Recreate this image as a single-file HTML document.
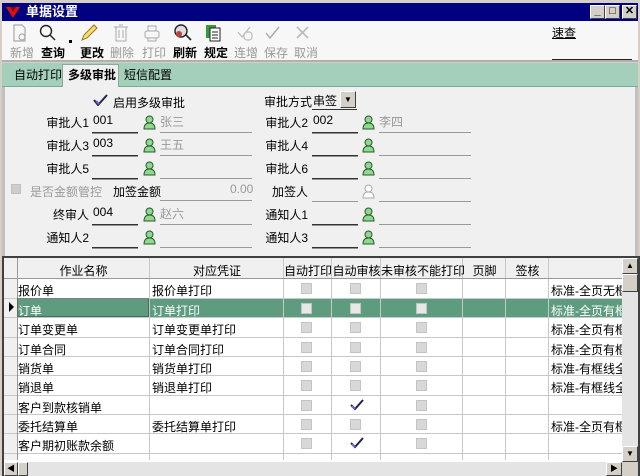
<!DOCTYPE html>
<html><head><meta charset="utf-8"><style>
*{margin:0;padding:0;box-sizing:border-box}
body{width:640px;height:476px;overflow:hidden;background:#d4d0c8;font-family:"Liberation Sans","Noto Sans CJK SC",sans-serif;font-size:12px;color:#000;position:relative}
.a{position:absolute;white-space:nowrap}
.title{left:2px;top:3px;width:636px;height:18px;background:#000080;color:#fff;font-weight:bold;font-size:13px;line-height:18px;padding-left:24px}
.wb{top:5px;width:15px;height:14px;background:#d4d0c8;border:1px solid;border-color:#fff #404040 #404040 #fff;font-size:11px;line-height:11px;text-align:center;color:#000;font-weight:bold}
.tb{left:2px;top:21px;width:636px;height:41px;background:#f7f7f7;border-bottom:2px solid #b0b0b0}
.lbl{top:44px;font-size:12px;color:#999}
.lbl.b{color:#000;font-weight:bold}
.tabs{left:2px;top:63px;width:636px;height:24px;background:#a3cfbb;border-bottom:1px solid #7a9}
.tab{top:66px;font-size:12px;line-height:18px}
.form{left:2px;top:87px;width:636px;height:169px;background:#f0f0f0;border-left:3px solid #c0c0c0;border-right:3px solid #c0c0c0}
.l{font-size:12px;text-align:right;width:80px}
.grid{left:4px;top:258px;width:634px;height:217px;background:#fff}
.cb{width:10px;height:10px;background:#d4d4d4;border:1px solid #c0c0c0}
</style></head><body>
<div class="a title">单据设置</div>
<svg class="a" style="left:6px;top:6px" width="14" height="12"><path d="M0 1 L14 1 L7 12Z" fill="#e01010"/><path d="M4 1 L7 6 L10 1" fill="#800"/></svg>
<div class="a wb" style="left:590px">_</div>
<div class="a wb" style="left:605px">□</div>
<div class="a wb" style="left:622px">✕</div>
<div class="a tb"></div>
<svg class="a" style="left:0;top:22px" width="330" height="22">
<g fill="none" stroke="#aaa" stroke-width="1.2"><path d="M14 3h8l3 3v13h-11z"/><circle cx="22" cy="15" r="3"/></g>
<g fill="none" stroke="#222" stroke-width="1.4"><circle cx="46" cy="9" r="5.5"/><path d="M50 13l5 5"/></g>
<path d="M69 21h3v-3h-3z" fill="#000"/>
<path d="M82 18l2-5 10-10 3 3-10 10z" fill="#f8e070" stroke="#a07020"/>
<g fill="none" stroke="#aaa"><path d="M114 5h14M116 5v14h10v-14M119 8v8M123 8v8M119 3h4"/></g>
<g fill="none" stroke="#aaa"><rect x="145" y="9" width="14" height="7" rx="2"/><path d="M148 9v-5h8v5M148 16v3h8v-3"/></g>
<g><circle cx="181" cy="9" r="6" fill="#ddd" stroke="#222" stroke-width="1.4"/><path d="M186 13l5 5" stroke="#222" stroke-width="1.6"/><circle cx="179" cy="12" r="3" fill="#c04040"/></g>
<g><rect x="206" y="3" width="10" height="13" fill="#3a9a3a"/><rect x="210" y="6" width="10" height="13" fill="#fff" stroke="#222"/><path d="M212 10h6M212 13h6M212 16h6" stroke="#222"/></g>
<g fill="none" stroke="#bbb" stroke-width="1.2"><path d="M238 10l4 5 8-10"/><rect x="244" y="10" width="8" height="8" rx="3"/></g>
<path d="M266 11l4 5 9-11" fill="none" stroke="#aaa" stroke-width="1.4"/>
<path d="M297 5l11 11M308 5l-11 11" stroke="#bbb" stroke-width="1.6"/>
</svg>
<div class="a lbl" style="left:10px">新增</div>
<div class="a lbl b" style="left:41px">查询</div>
<div class="a lbl b" style="left:80px">更改</div>
<div class="a lbl" style="left:110px">删除</div>
<div class="a lbl" style="left:142px">打印</div>
<div class="a lbl b" style="left:173px">刷新</div>
<div class="a lbl b" style="left:204px">规定</div>
<div class="a lbl" style="left:234px">连增</div>
<div class="a lbl" style="left:264px">保存</div>
<div class="a lbl" style="left:294px">取消</div>
<div class="a" style="left:552px;top:24px;text-decoration:underline;font-size:12px">速查</div>
<div class="a" style="left:552px;top:59px;width:80px;height:1px;background:#222"></div>
<div class="a tabs"></div>
<div class="a" style="left:62px;top:64px;width:57px;height:24px;background:#f0f0f0;border:1px solid #8a9;border-bottom:none"></div>
<div class="a tab" style="left:14px">自动打印</div>
<div class="a tab" style="left:68px;font-weight:bold">多级审批</div>
<div class="a tab" style="left:124px">短信配置</div>
<div class="a form"></div>
<svg class="a" style="left:93px;top:94px" width="16" height="12"><path d="M1 6l4 5 9-10" fill="none" stroke="#224" stroke-width="2"/><path d="M3 7l3 3" stroke="#66c" stroke-width="2"/></svg>
<div class="a" style="left:113px;top:94px">启用多级审批</div>
<div class="a" style="left:264px;top:93px">审批方式</div>
<div class="a" style="left:313px;top:92px">串签</div>
<div class="a" style="left:340px;top:91px;width:16px;height:17px;background:#d4d0c8;border:1px solid;border-color:#fff #404040 #404040 #fff;font-size:8px;text-align:center;line-height:15px">▼</div>
<div class="a" style="left:312px;top:109px;width:45px;height:1px;background:#333"></div>

<svg width="0" height="0" style="position:absolute"><defs><g id="p"><circle cx="6.5" cy="4.5" r="3.5" fill="#8fd88f" stroke="#2a5a2a"/><path d="M1 14c0-5 3-6 5.5-6s5.5 1 5.5 6z" fill="#8fd88f" stroke="#2a5a2a"/></g><g id="q"><circle cx="6.5" cy="4.5" r="3.5" fill="#fff" stroke="#aaa"/><path d="M1 14c0-5 3-6 5.5-6s5.5 1 5.5 6z" fill="#fff" stroke="#aaa"/></g></defs></svg>

<div class="a l" style="left:9px;top:114px">审批人1</div><div class="a" style="left:93px;top:113px">001</div>
<div class="a l" style="left:9px;top:137px">审批人3</div><div class="a" style="left:93px;top:136px">003</div>
<div class="a l" style="left:9px;top:160px">审批人5</div>
<div class="a l" style="left:9px;top:206px">终审人</div><div class="a" style="left:93px;top:205px">004</div>
<div class="a l" style="left:9px;top:229px">通知人2</div>
<div class="a" style="left:160px;top:113px;color:#999">张三</div>
<div class="a" style="left:160px;top:136px;color:#999">王五</div>
<div class="a" style="left:160px;top:205px;color:#999">赵六</div>
<div class="a cb" style="left:11px;top:184px;background:#ccc"></div>
<div class="a" style="left:30px;top:183px;color:#999">是否金额管控</div>
<div class="a" style="left:113px;top:183px">加签金额</div>
<div class="a" style="left:230px;top:182px;color:#999">0.00</div>
<div class="a" style="left:160px;top:200px;width:92px;height:1px;background:#999"></div>

<div class="a l" style="left:228px;top:114px">审批人2</div><div class="a" style="left:313px;top:113px">002</div>
<div class="a l" style="left:228px;top:137px">审批人4</div>
<div class="a l" style="left:228px;top:160px">审批人6</div>
<div class="a l" style="left:228px;top:183px">加签人</div>
<div class="a l" style="left:228px;top:206px">通知人1</div>
<div class="a l" style="left:228px;top:229px">通知人3</div>
<div class="a" style="left:379px;top:113px;color:#999">李四</div>

<svg class="a" style="left:0;top:110px" width="480" height="140">
<rect x="92" y="22" width="46" height="1.5" fill="#333"/><rect x="160" y="22" width="92" height="1" fill="#999"/>
<rect x="92" y="45" width="46" height="1.5" fill="#333"/><rect x="160" y="45" width="92" height="1" fill="#999"/>
<rect x="92" y="68" width="46" height="1.5" fill="#333"/><rect x="160" y="68" width="92" height="1" fill="#999"/>
<rect x="92" y="114" width="46" height="1.5" fill="#333"/><rect x="160" y="114" width="92" height="1" fill="#999"/>
<rect x="92" y="137" width="46" height="1.5" fill="#333"/><rect x="160" y="137" width="92" height="1" fill="#999"/>
<use href="#p" x="143" y="5"/><use href="#p" x="143" y="28"/><use href="#p" x="143" y="51"/><use href="#p" x="143" y="97"/><use href="#p" x="143" y="120"/>
<g transform="translate(220,0)">
<rect x="92" y="22" width="46" height="1.5" fill="#333"/><rect x="159" y="22" width="92" height="1" fill="#999"/>
<rect x="92" y="45" width="46" height="1.5" fill="#333"/><rect x="159" y="45" width="92" height="1" fill="#999"/>
<rect x="92" y="68" width="46" height="1.5" fill="#333"/><rect x="159" y="68" width="92" height="1" fill="#999"/>
<rect x="92" y="91" width="46" height="1" fill="#999"/><rect x="159" y="91" width="92" height="1" fill="#999"/>
<rect x="92" y="114" width="46" height="1.5" fill="#333"/><rect x="159" y="114" width="92" height="1" fill="#999"/>
<rect x="92" y="137" width="46" height="1.5" fill="#333"/><rect x="159" y="137" width="92" height="1" fill="#999"/>
<use href="#p" x="142" y="5"/><use href="#p" x="142" y="28"/><use href="#p" x="142" y="51"/><use href="#q" x="142" y="74"/><use href="#p" x="142" y="97"/><use href="#p" x="142" y="120"/>
</g>
</svg>

<div class="a" style="left:2px;top:256px;width:638px;height:220px;background:#404040"></div>
<div class="a grid"></div>
<svg class="a" style="left:4px;top:258px" width="618" height="202">
<rect x="0" y="0" width="618" height="21" fill="#f0f0f0"/>
<rect x="0" y="0" width="13" height="202" fill="#f0f0f0"/>
<rect x="13" y="40" width="605" height="19" fill="#5e9c80"/>
<g stroke="#c8c8c8">
<path d="M0 40.5h618M0 59.5h618M0 79.5h618M0 98.5h618M0 117.5h618M0 137.5h618M0 156.5h618M0 175.5h618M0 195.5h618"/>
<path d="M145.5 0v202M279.5 0v202M327.5 0v202M376.5 0v202M458.5 0v202M501.5 0v202M544.5 0v202"/>
</g>
<path d="M0 20.5h618M13.5 0v202" stroke="#999"/>
<path d="M5 44l5 5-5 5z" fill="#000"/>
<path d="M13.5 40.5h131v18h-131z" fill="none" stroke="#333" stroke-dasharray="1 1"/>
</svg>
<div class="a" style="left:17px;width:133px;top:262px;text-align:center">作业名称</div>
<div class="a" style="left:150px;width:134px;top:262px;text-align:center">对应凭证</div>
<div class="a" style="left:284px;width:48px;top:262px;text-align:center">自动打印</div>
<div class="a" style="left:332px;width:49px;top:262px;text-align:center">自动审核</div>
<div class="a" style="left:381px;width:82px;top:262px;text-align:center">未审核不能打印</div>
<div class="a" style="left:463px;width:43px;top:262px;text-align:center">页脚</div>
<div class="a" style="left:506px;width:43px;top:262px;text-align:center">签核</div>
<div class="a" style="left:18px;top:282px">报价单</div>
<div class="a" style="left:18px;top:302px;color:#fff">订单</div>
<div class="a" style="left:18px;top:321px">订单变更单</div>
<div class="a" style="left:18px;top:341px">订单合同</div>
<div class="a" style="left:18px;top:360px">销货单</div>
<div class="a" style="left:18px;top:379px">销退单</div>
<div class="a" style="left:18px;top:399px">客户到款核销单</div>
<div class="a" style="left:18px;top:418px">委托结算单</div>
<div class="a" style="left:18px;top:437px">客户期初账款余额</div>
<div class="a" style="left:152px;top:282px">报价单打印</div>
<div class="a" style="left:152px;top:302px;color:#fff">订单打印</div>
<div class="a" style="left:152px;top:321px">订单变更单打印</div>
<div class="a" style="left:152px;top:341px">订单合同打印</div>
<div class="a" style="left:152px;top:360px">销货单打印</div>
<div class="a" style="left:152px;top:379px">销退单打印</div>
<div class="a" style="left:152px;top:418px">委托结算单打印</div>
<div class="a" style="left:551px;top:282px;width:71px;overflow:hidden">标准-全页无框线</div>
<div class="a" style="left:551px;top:302px;width:71px;overflow:hidden;color:#fff">标准-全页有框线</div>
<div class="a" style="left:551px;top:321px;width:71px;overflow:hidden">标准-全页有框线</div>
<div class="a" style="left:551px;top:341px;width:71px;overflow:hidden">标准-全页有框线</div>
<div class="a" style="left:551px;top:360px;width:71px;overflow:hidden">标准-有框线全页</div>
<div class="a" style="left:551px;top:379px;width:71px;overflow:hidden">标准-有框线全页</div>
<div class="a" style="left:551px;top:418px;width:71px;overflow:hidden">标准-全页有框线</div>
<svg class="a" style="left:0;top:279px" width="480" height="180">
<g fill="#d8d8d8" stroke="#c4c4c4">
<rect x="301.5" y="4.5" width="10" height="10"/><rect x="350.5" y="4.5" width="10" height="10"/><rect x="416.5" y="4.5" width="10" height="10"/>
<rect x="301.5" y="24.5" width="10" height="10" fill="#e8e8e8"/><rect x="350.5" y="24.5" width="10" height="10" fill="#e8e8e8"/><rect x="416.5" y="24.5" width="10" height="10" fill="#e8e8e8"/>
<rect x="301.5" y="43.5" width="10" height="10"/><rect x="350.5" y="43.5" width="10" height="10"/><rect x="416.5" y="43.5" width="10" height="10"/>
<rect x="301.5" y="63.5" width="10" height="10"/><rect x="350.5" y="63.5" width="10" height="10"/><rect x="416.5" y="63.5" width="10" height="10"/>
<rect x="301.5" y="82.5" width="10" height="10"/><rect x="350.5" y="82.5" width="10" height="10"/><rect x="416.5" y="82.5" width="10" height="10"/>
<rect x="301.5" y="101.5" width="10" height="10"/><rect x="350.5" y="101.5" width="10" height="10"/><rect x="416.5" y="101.5" width="10" height="10"/>
<rect x="301.5" y="121.5" width="10" height="10"/><rect x="416.5" y="121.5" width="10" height="10"/>
<rect x="301.5" y="140.5" width="10" height="10"/><rect x="350.5" y="140.5" width="10" height="10"/><rect x="416.5" y="140.5" width="10" height="10"/>
<rect x="301.5" y="159.5" width="10" height="10"/><rect x="416.5" y="159.5" width="10" height="10"/>
</g>
<g fill="none" stroke-width="2"><path d="M351 126l4 4 8-9" stroke="#224"/><path d="M352 127l3 3" stroke="#66c"/><path d="M351 164l4 4 8-9" stroke="#224"/><path d="M352 165l3 3" stroke="#66c"/></g>
</svg>
<div class="a" style="left:622px;top:258px;width:16px;height:204px;background:#e4e4e4"></div>
<div class="a wb" style="left:622px;top:258px;width:16px;height:16px;font-size:8px;line-height:13px">▲</div>
<div class="a wb" style="left:622px;top:274px;width:16px;height:18px"></div>
<div class="a wb" style="left:622px;top:446px;width:16px;height:16px;font-size:8px;line-height:13px">▼</div>
<div class="a" style="left:4px;top:462px;width:618px;height:14px;background:#e4e4e4"></div>
<div class="a wb" style="left:4px;top:462px;width:14px;height:14px;font-size:8px;line-height:11px">◀</div>
<div class="a wb" style="left:18px;top:462px;width:10px;height:14px"></div>
<div class="a wb" style="left:606px;top:462px;width:16px;height:14px;font-size:8px;line-height:11px">▶</div>
<div class="a" style="left:622px;top:462px;width:16px;height:14px;background:#d4d0c8"></div>
</body></html>
